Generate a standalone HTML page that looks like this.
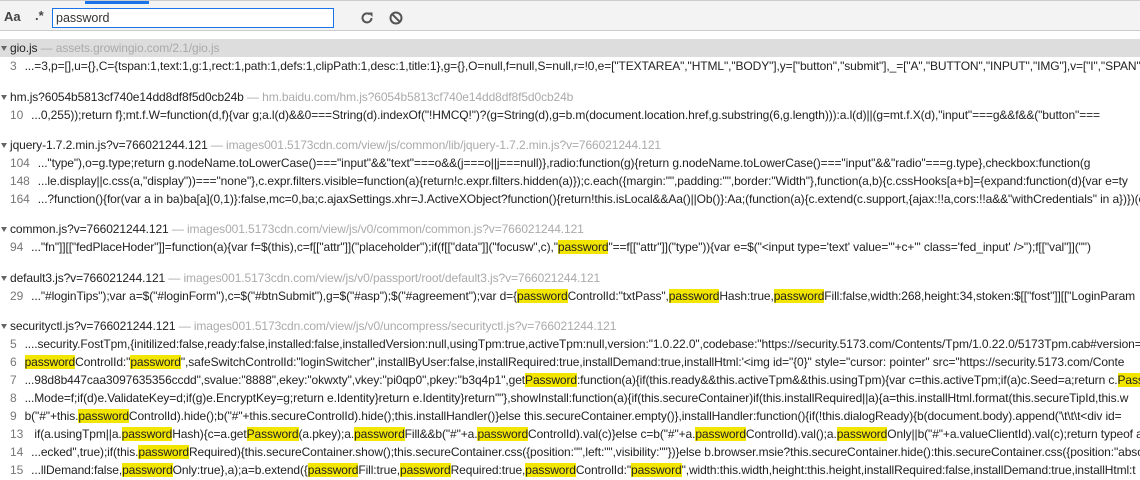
<!DOCTYPE html>
<html><head><meta charset="utf-8"><style>
body{margin:0;width:1140px;height:480px;overflow:hidden;background:#fff;font-family:"Segoe UI","Liberation Sans",sans-serif;font-size:12px;color:#222;position:relative}
.tb{position:absolute;left:0;top:0;width:1140px;height:31px;border-top:1px solid #ccc;border-bottom:1px solid #ccc;box-sizing:border-box;background:#f3f3f3}
.tab{position:absolute;left:85px;top:0;width:64px;height:3px;background:#1a73e8}
.aa{position:absolute;left:4px;top:8px;font-weight:bold;font-size:13px;color:#444}
.re{position:absolute;left:35px;top:7px;font-size:13px;color:#444;font-weight:bold}
.inp{position:absolute;left:52px;top:7px;width:282px;height:20px;border:1px solid #1a73e8;box-sizing:border-box;background:#fff;padding-left:3px;line-height:18px;font-size:12.5px;color:#333}
.r{position:absolute;left:0;width:1140px;height:18px;line-height:18px;white-space:nowrap;overflow:hidden;letter-spacing:-0.1px}
.h{padding-left:10px}
.h:before{content:"";position:absolute;left:1px;top:7px;border-left:3.5px solid transparent;border-right:3.5px solid transparent;border-top:5px solid #666}
.u{color:#aaa}
.n{display:inline-block;color:#777;margin-left:10px;margin-right:8px}
b{font-weight:normal;background:#f2e500}
</style></head><body>
<div class="tb"><div class="tab"></div>
<div class="aa">Aa</div><div class="re">.*</div>
<div class="inp">password</div>
<svg style="position:absolute;left:360px;top:10px" width="14" height="14" viewBox="0 0 14 14"><path d="M11.5 7A4.5 4.5 0 1 1 9.8 3.4" fill="none" stroke="#555" stroke-width="2"/><path d="M8 1.5h4.5V6z" fill="#555"/></svg>
<svg style="position:absolute;left:389px;top:10px" width="14" height="14" viewBox="0 0 14 14"><circle cx="7" cy="7" r="5.5" fill="none" stroke="#555" stroke-width="2"/><path d="M3.2 3.2l7.6 7.6" stroke="#555" stroke-width="2"/></svg>
</div>

<div class="r h" style="top:39px;background:#ddd">gio.js <span class="u">— assets.growingio.com/2.1/gio.js</span></div>
<div class="r" style="top:57px"><span class="n">3</span>...=3,p=[],u={},C={tspan:1,text:1,g:1,rect:1,path:1,defs:1,clipPath:1,desc:1,title:1},g={},O=null,f=null,S=null,r=!0,e=["TEXTAREA","HTML","BODY"],y=["button","submit"],_=["A","BUTTON","INPUT","IMG"],v=["I","SPAN",</div>

<div class="r h" style="top:88px">hm.js?6054b5813cf740e14dd8df8f5d0cb24b <span class="u">— hm.baidu.com/hm.js?6054b5813cf740e14dd8df8f5d0cb24b</span></div>
<div class="r" style="top:106px"><span class="n">10</span>...0,255));return f};mt.f.W=function(d,f){var g;a.l(d)&amp;&amp;0===String(d).indexOf("!HMCQ!")?(g=String(d),g=b.m(document.location.href,g.substring(6,g.length))):a.l(d)||(g=mt.f.X(d),"input"===g&amp;&amp;f&amp;&amp;("button"===</div>

<div class="r h" style="top:136px">jquery-1.7.2.min.js?v=766021244.121 <span class="u">— images001.5173cdn.com/view/js/common/lib/jquery-1.7.2.min.js?v=766021244.121</span></div>
<div class="r" style="top:154px"><span class="n">104</span>..."type"),o=g.type;return g.nodeName.toLowerCase()==="input"&amp;&amp;"text"===o&amp;&amp;(j===o||j===null)},radio:function(g){return g.nodeName.toLowerCase()==="input"&amp;&amp;"radio"===g.type},checkbox:function(g</div>
<div class="r" style="top:172px"><span class="n">148</span>...le.display||c.css(a,"display"))==="none"},c.expr.filters.visible=function(a){return!c.expr.filters.hidden(a)});c.each({margin:"",padding:"",border:"Width"},function(a,b){c.cssHooks[a+b]={expand:function(d){var e=ty</div>
<div class="r" style="top:190px"><span class="n">164</span>...?function(){for(var a in ba)ba[a](0,1)}:false,mc=0,ba;c.ajaxSettings.xhr=J.ActiveXObject?function(){return!this.isLocal&amp;&amp;Aa()||Ob()}:Aa;(function(a){c.extend(c.support,{ajax:!!a,cors:!!a&amp;&amp;"withCredentials" in a})})(c</div>

<div class="r h" style="top:220px">common.js?v=766021244.121 <span class="u">— images001.5173cdn.com/view/js/v0/common/common.js?v=766021244.121</span></div>
<div class="r" style="top:238px"><span class="n">94</span>..."fn"]][["fedPlaceHoder"]]=function(a){var f=$(this),c=f[["attr"]]("placeholder");if(f[["data"]]("focusw",c),"<b>password</b>"==f[["attr"]]("type")){var e=$("&lt;input type='text' value='"+c+"' class='fed_input' /&gt;");f[["val"]]("")</div>

<div class="r h" style="top:269px">default3.js?v=766021244.121 <span class="u">— images001.5173cdn.com/view/js/v0/passport/root/default3.js?v=766021244.121</span></div>
<div class="r" style="top:287px"><span class="n">29</span>..."#loginTips");var a=$("#loginForm"),c=$("#btnSubmit"),g=$("#asp");$("#agreement");var d={<b>password</b>ControlId:"txtPass",<b>password</b>Hash:true,<b>password</b>Fill:false,width:268,height:34,stoken:$[["fost"]][["LoginParam</div>

<div class="r h" style="top:317px">securityctl.js?v=766021244.121 <span class="u">— images001.5173cdn.com/view/js/v0/uncompress/securityctl.js?v=766021244.121</span></div>
<div class="r" style="top:335px"><span class="n">5</span>....security.FostTpm,{initilized:false,ready:false,installed:false,installedVersion:null,usingTpm:true,activeTpm:null,version:"1.0.22.0",codebase:"https://security.5173.com/Contents/Tpm/1.0.22.0/5173Tpm.cab#version=1</div>
<div class="r" style="top:353px"><span class="n">6</span><b>password</b>ControlId:"<b>password</b>",safeSwitchControlId:"loginSwitcher",installByUser:false,installRequired:true,installDemand:true,installHtml:'&lt;img id="{0}" style="cursor: pointer" src="https://security.5173.com/Conte</div>
<div class="r" style="top:371px"><span class="n">7</span>...98d8b447caa3097635356ccdd",svalue:"8888",ekey:"okwxty",vkey:"pi0qp0",pkey:"b3q4p1",get<b>Password</b>:function(a){if(this.ready&amp;&amp;this.activeTpm&amp;&amp;this.usingTpm){var c=this.activeTpm;if(a)c.Seed=a;return c.<b>Pass</b></div>
<div class="r" style="top:389px"><span class="n">8</span>...Mode=f;if(d)e.ValidateKey=d;if(g)e.EncryptKey=g;return e.Identity}return e.Identity}return""},showInstall:function(a){if(this.secureContainer)if(this.installRequired||a){a=this.installHtml.format(this.secureTipId,this.w</div>
<div class="r" style="top:407px"><span class="n">9</span>b("#"+this.<b>password</b>ControlId).hide();b("#"+this.secureControlId).hide();this.installHandler()}else this.secureContainer.empty()},installHandler:function(){if(!this.dialogReady){b(document.body).append('\t\t\t&lt;div id=</div>
<div class="r" style="top:425px"><span class="n">13</span> if(a.usingTpm||a.<b>password</b>Hash){c=a.get<b>Password</b>(a.pkey);a.<b>password</b>Fill&amp;&amp;b("#"+a.<b>password</b>ControlId).val(c)}else c=b("#"+a.<b>password</b>ControlId).val();a.<b>password</b>Only||b("#"+a.valueClientId).val(c);return typeof a.</div>
<div class="r" style="top:443px"><span class="n">14</span>...ecked",true);if(this.<b>password</b>Required){this.secureContainer.show();this.secureContainer.css({position:"",left:"",visibility:""})}else b.browser.msie?this.secureContainer.hide():this.secureContainer.css({position:"absol</div>
<div class="r" style="top:461px"><span class="n">15</span>...llDemand:false,<b>password</b>Only:true},a);a=b.extend({<b>password</b>Fill:true,<b>password</b>Required:true,<b>password</b>ControlId:"<b>password</b>",width:this.width,height:this.height,installRequired:false,installDemand:true,installHtml:t</div>
</body></html>
